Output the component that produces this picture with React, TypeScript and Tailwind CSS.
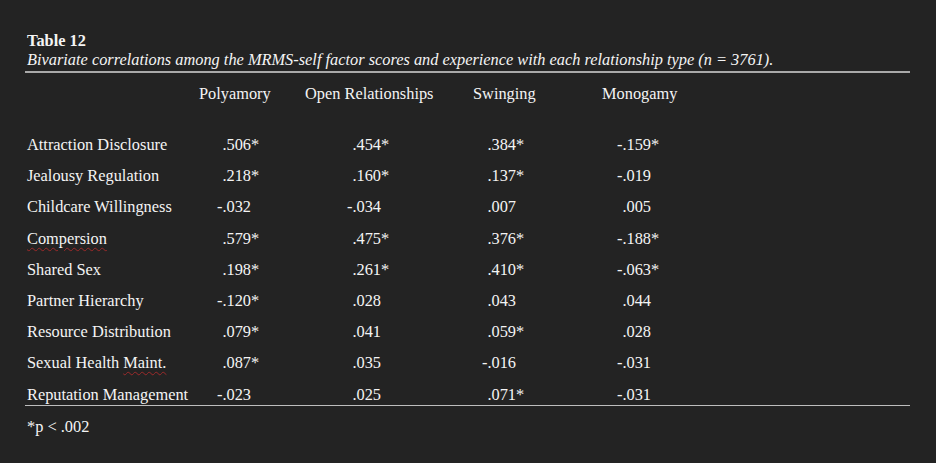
const columns = ["Polyamory", "Open Relationships", "Swinging", "Monogamy"];

const rows: { label: string; values: string[] }[] = [
  { label: "Attraction Disclosure", values: [".506*", ".454*", ".384*", "-.159*"] },
  { label: "Jealousy Regulation", values: [".218*", ".160*", ".137*", "-.019"] },
  { label: "Childcare Willingness", values: ["-.032", "-.034", ".007", ".005"] },
  { label: "Compersion", values: [".579*", ".475*", ".376*", "-.188*"] },
  { label: "Shared Sex", values: [".198*", ".261*", ".410*", "-.063*"] },
  { label: "Partner Hierarchy", values: ["-.120*", ".028", ".043", ".044"] },
  { label: "Resource Distribution", values: [".079*", ".041", ".059*", ".028"] },
  { label: "Sexual Health Maint.", values: [".087*", ".035", "-.016", "-.031"] },
  { label: "Reputation Management", values: ["-.023", ".025", ".071*", "-.031"] },
];

// values line up on the decimal point, the minus sign hangs in its own slot
const Value = ({ v }: { v: string }) => {
  const neg = v.startsWith("-");
  return (
    <span className="whitespace-nowrap">
      <span className="inline-block w-[5.45px]">{neg ? "-" : ""}</span>
      {neg ? v.slice(1) : v}
    </span>
  );
};

const squiggle = "underline decoration-wavy decoration-[#9c2a2a] decoration-1 underline-offset-[3px]";

const Label = ({ label }: { label: string }) => {
  if (label === "Compersion") {
    return <span className={squiggle}>{label}</span>;
  }
  if (label === "Sexual Health Maint.") {
    return (
      <span>
        Sexual Health <span className={squiggle}>Maint.</span>
      </span>
    );
  }
  return <span>{label}</span>;
};

export default function App() {
  return (
    <div
      className="w-full h-[463px] bg-[#232323] text-[#f4f4f4] text-[16.35px] pt-[31px] pl-[25px] overflow-hidden"
      style={{ fontFamily: '"Liberation Serif", "Times New Roman", serif' }}
    >
      <div className="w-[885px]">
        <p className="pl-[2px] font-bold leading-[19px]">Table 12</p>
        <p className="pl-[2px] italic leading-[19px] pb-[2px] border-b-2 border-[#a9a9a9]">
          Bivariate correlations among the MRMS-self factor scores and experience with each relationship type (n = 3761).
        </p>

        <div className="mt-[10px] pl-[2px] grid grid-cols-[172px_106px_168px_129px_auto] leading-[22px]">
          <span />
          {columns.map((c) => (
            <span key={c}>{c}</span>
          ))}
        </div>

        <div className="mt-[29px] pl-[2px] flex flex-col gap-[10.2px]">
          {rows.map((r) => (
            <div key={r.label} className="grid grid-cols-[190px_130px_135px_135px_auto] leading-[21px]">
              <Label label={r.label} />
              {r.values.map((v, i) => (
                <Value key={i} v={v} />
              ))}
            </div>
          ))}
        </div>

        <div className="border-t border-[#bdbdbd]">
          <p className="pl-[2px] mt-[10px] leading-[22px]">*p &lt; .002</p>
        </div>
      </div>
    </div>
  );
}
